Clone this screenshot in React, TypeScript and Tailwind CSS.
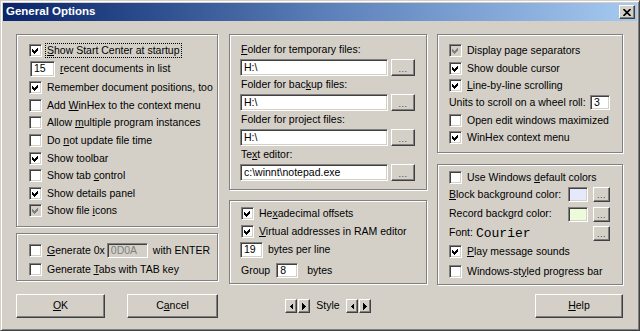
import React from "react";

const SUNK =
  "border border-t-[#808080] border-l-[#808080] border-b-white border-r-white shadow-[inset_1px_1px_0_#404040,inset_-1px_-1px_0_#d4d0c8]";
const RAISED =
  "border border-t-white border-l-white border-b-[#404040] border-r-[#404040] shadow-[inset_-1px_-1px_0_#808080] bg-[#d4d0c8]";
const PANEL =
  "border border-[#808080] shadow-[inset_1px_1px_0_#fff,1px_1px_0_#fff]";

function Check({ checked = false, disabled = false }: { checked?: boolean; disabled?: boolean }) {
  return (
    <span
      className={`relative inline-block w-[13px] h-[13px] shrink-0 ${SUNK} ${
        disabled ? "bg-[#d4d0c8]" : "bg-white"
      }`}
    >
      {checked && (
        <svg
          className="absolute left-0 top-0"
          width="11"
          height="11"
          viewBox="0 0 11 11"
          shapeRendering="crispEdges"
        >
          <polygon
            points="2,4 4,6 8,2 8,5 4,9 2,7"
            fill={disabled ? "#808080" : "#000"}
          />
        </svg>
      )}
    </span>
  );
}

function CheckRow({
  checked,
  disabled,
  h,
  children,
  focus,
}: {
  checked?: boolean;
  disabled?: boolean;
  h: string;
  children: React.ReactNode;
  focus?: boolean;
}) {
  return (
    <div className={`flex items-center gap-[4px] ${h}`}>
      <Check checked={checked} disabled={disabled} />
      <span
        className={`px-[1px] leading-[13px] whitespace-nowrap ${
          focus ? "outline-1 outline-dotted outline-black" : ""
        }`}
      >
        {children}
      </span>
    </div>
  );
}

function Field({ value, cls }: { value: string; cls: string }) {
  return (
    <div className={`${SUNK} bg-white flex items-center pl-[3px] whitespace-nowrap overflow-hidden ${cls}`}>
      {value}
    </div>
  );
}

function Dots({ cls }: { cls: string }) {
  return (
    <div className={`${RAISED} flex items-end justify-center pb-[3px] ${cls}`}>
      <span className="text-[9px] leading-[6px] tracking-[0.5px] text-[#404040]">...</span>
    </div>
  );
}

function Arrow({ dir }: { dir: "l" | "r" }) {
  return (
    <div className={`${RAISED} w-[12px] h-[14px] flex items-center justify-center`}>
      <svg width="4" height="7" viewBox="0 0 4 7" shapeRendering="crispEdges">
        {dir === "l" ? (
          <polygon points="4,0 4,7 0.5,3.5" fill="#000" />
        ) : (
          <polygon points="0,0 0,7 3.5,3.5" fill="#000" />
        )}
      </svg>
    </div>
  );
}

export default function App() {
  return (
    <div
      className="w-[640px] h-[331px] bg-[#d4d0c8] border border-t-[#d4d0c8] border-l-[#d4d0c8] border-b-[#404040] border-r-[#404040] shadow-[inset_1px_1px_0_#fff,inset_-1px_-1px_0_#808080] p-[2px] text-black text-[10.5px] overflow-hidden"
      style={{ fontFamily: '"Liberation Sans", Arial, sans-serif' }}
    >
      {/* Title bar */}
      <div className="h-[18px] bg-linear-to-r from-[#0a246a] via-[#5a7eb8] to-[#a6caf0] flex items-center justify-between pl-[3px] pr-[2px]">
        <span className="text-white font-bold text-[11.5px] leading-none">General Options</span>
        <div className={`${RAISED} w-[16px] h-[14px] flex items-center justify-center`}>
          <svg width="8" height="7" viewBox="0 0 8 7">
            <path d="M0.5 0 L7.5 7 M7.5 0 L0.5 7" stroke="#000" strokeWidth="1.6" />
          </svg>
        </div>
      </div>

      {/* Body */}
      <div className="flex pt-[13px] pl-[13px]">
        {/* Left column */}
        <div className="w-[202px] flex flex-col">
          <div className={`${PANEL} h-[193px] pl-[12px] pt-[6px] flex flex-col`}>
            <CheckRow checked h="h-[18px]" focus>
              <u>S</u>how Start Center at startup
            </CheckRow>
            <div className="h-[20px] flex items-center">
              <Field value="15" cls="w-[25px] h-[16px] ml-[1px]" />
              <span className="ml-[5px] whitespace-nowrap">
                <u>r</u>ecent documents in list
              </span>
            </div>
            <CheckRow checked h="h-[17.6px]">Remember document positions, too</CheckRow>
            <CheckRow h="h-[17.6px]">
              Add <u>W</u>inHex to the context menu
            </CheckRow>
            <CheckRow h="h-[17.6px]">
              Allow <u>m</u>ultiple program instances
            </CheckRow>
            <CheckRow h="h-[17.6px]">
              Do <u>n</u>ot update file time
            </CheckRow>
            <CheckRow checked h="h-[17.6px]">Show toolbar</CheckRow>
            <CheckRow h="h-[17.6px]">
              Show tab <u>c</u>ontrol
            </CheckRow>
            <CheckRow checked h="h-[17.6px]">Show details panel</CheckRow>
            <CheckRow checked disabled h="h-[17.6px]">
              Show file <u>i</u>cons
            </CheckRow>
          </div>

          <div className={`${PANEL} mt-[6px] h-[48px] pl-[12px] pt-[7px] flex flex-col`}>
            <div className="h-[19px] flex items-center gap-[4px]">
              <Check />
              <span className="px-[1px] whitespace-nowrap">
                <u>G</u>enerate 0x
              </span>
              <div className={`${SUNK} bg-[#d4d0c8] w-[41px] h-[15px] flex items-center pl-[3px] text-[#808080] -ml-[3px]`}>
                0D0A
              </div>
              <span className="ml-[1px] whitespace-nowrap">with ENTER</span>
            </div>
            <CheckRow h="h-[19px]">
              Generate <u>T</u>abs with TAB key
            </CheckRow>
          </div>

          <div className="mt-[13px] flex">
            <div className={`${RAISED} w-[91px] h-[24px] flex items-center justify-center shadow-[inset_-1px_-1px_0_#808080,0_0_0_0_#000]`}>
              <u>O</u>K
            </div>
            <div className={`${RAISED} ml-[22px] w-[91px] h-[24px] flex items-center justify-center shrink-0`}>
              C<u>a</u>ncel
            </div>
          </div>
        </div>

        {/* Middle column */}
        <div className="w-[198px] ml-[11px] flex flex-col">
          <div className={`${PANEL} h-[156px] pl-[10px] pt-[6px] flex flex-col`}>
            <div className="h-[18px] flex items-center pl-[1px] whitespace-nowrap">
              <u>F</u>older for temporary files:
            </div>
            <div className="h-[17px] flex">
              <Field value="H:\" cls="w-[148px] h-[17px]" />
              <Dots cls="ml-[3px] w-[24px] h-[17px]" />
            </div>
            <div className="h-[18px] flex items-center pl-[1px] whitespace-nowrap">
              Folder for bac<u>k</u>up files:
            </div>
            <div className="h-[17px] flex">
              <Field value="H:\" cls="w-[148px] h-[17px]" />
              <Dots cls="ml-[3px] w-[24px] h-[17px]" />
            </div>
            <div className="h-[18px] flex items-center pl-[1px] whitespace-nowrap">
              Folder for project files:
            </div>
            <div className="h-[17px] flex">
              <Field value="H:\" cls="w-[148px] h-[17px]" />
              <Dots cls="ml-[3px] w-[24px] h-[17px]" />
            </div>
            <div className="h-[18px] flex items-center pl-[1px] whitespace-nowrap">
              Te<u>x</u>t editor:
            </div>
            <div className="h-[17px] flex">
              <Field value="c:\winnt\notepad.exe" cls="w-[148px] h-[17px]" />
              <Dots cls="ml-[3px] w-[24px] h-[17px]" />
            </div>
          </div>

          <div className={`${PANEL} mt-[10px] h-[84px] pl-[11px] pt-[3px] flex flex-col`}>
            <CheckRow checked h="h-[18px]">
              He<u>x</u>adecimal offsets
            </CheckRow>
            <CheckRow checked h="h-[18px]">
              <u>V</u>irtual addresses in RAM editor
            </CheckRow>
            <div className="h-[20px] flex items-center">
              <Field value="19" cls="w-[23px] h-[16px] -ml-[1px]" />
              <span className="ml-[5px] whitespace-nowrap">bytes per line</span>
            </div>
            <div className="h-[21px] flex items-center">
              <span className="whitespace-nowrap">Group</span>
              <Field value="8" cls="ml-[6px] w-[22px] h-[15px]" />
              <span className="ml-[9px] whitespace-nowrap">bytes</span>
            </div>
          </div>

          <div className="mt-[15px] h-[14px] flex items-center justify-center">
            <div className="flex gap-[1px]">
              <Arrow dir="l" />
              <Arrow dir="r" />
            </div>
            <span className="mx-[6px] whitespace-nowrap">Style</span>
            <div className="flex gap-[1px]">
              <Arrow dir="l" />
              <Arrow dir="r" />
            </div>
          </div>
        </div>

        {/* Right column */}
        <div className="w-[186px] ml-[10px] flex flex-col">
          <div className={`${PANEL} h-[119px] pl-[11px] pt-[7px] flex flex-col`}>
            <CheckRow checked disabled h="h-[17.4px]">Display page separators</CheckRow>
            <CheckRow checked h="h-[17.4px]">Show double cursor</CheckRow>
            <CheckRow checked h="h-[17.4px]">
              <u>L</u>ine-by-line scrolling
            </CheckRow>
            <div className="h-[17.4px] flex items-center">
              <span className="whitespace-nowrap">Units to scroll on a wheel roll:</span>
              <Field value="3" cls="ml-auto mr-[12px] w-[20px] h-[15px]" />
            </div>
            <CheckRow h="h-[17.4px]">Open edit windows maximized</CheckRow>
            <CheckRow checked h="h-[17.4px]">WinHex context menu</CheckRow>
          </div>

          <div className={`${PANEL} mt-[11px] h-[121px] pl-[11px] pr-[12px] pt-[3px] flex flex-col`}>
            <CheckRow h="h-[18px]">
              Use Windows <u>d</u>efault colors
            </CheckRow>
            <div className="h-[17px] flex items-center">
              <span className="whitespace-nowrap">
                <u>B</u>lock background color:
              </span>
              <div className={`${SUNK} ml-auto w-[20px] h-[15px] bg-[#e6e8fc]`} />
              <Dots cls="ml-[5px] w-[17px] h-[15px]" />
            </div>
            <div className="h-[22px] flex items-center">
              <span className="whitespace-nowrap">Record backgrd color:</span>
              <div className={`${SUNK} ml-auto w-[20px] h-[15px] bg-[#eefbd9]`} />
              <Dots cls="ml-[5px] w-[17px] h-[15px]" />
            </div>
            <div className="h-[16px] flex items-center">
              <span className="whitespace-nowrap">Font:</span>
              <span
                className="ml-[3px] text-[13px] leading-none whitespace-nowrap"
                style={{ fontFamily: '"Liberation Mono", "Courier New", monospace' }}
              >
                Courier
              </span>
              <Dots cls="ml-auto w-[17px] h-[15px]" />
            </div>
            <CheckRow checked h="h-[21px]">
              <u>P</u>lay message sounds
            </CheckRow>
            <CheckRow h="h-[18px]">
              Windows-st<u>y</u>led progress bar
            </CheckRow>
          </div>

          <div className="mt-[9px] flex justify-end">
            <div className={`${RAISED} w-[88px] h-[24px] flex items-center justify-center`}>
              <u>H</u>elp
            </div>
          </div>
        </div>
      </div>
    </div>
  );
}
